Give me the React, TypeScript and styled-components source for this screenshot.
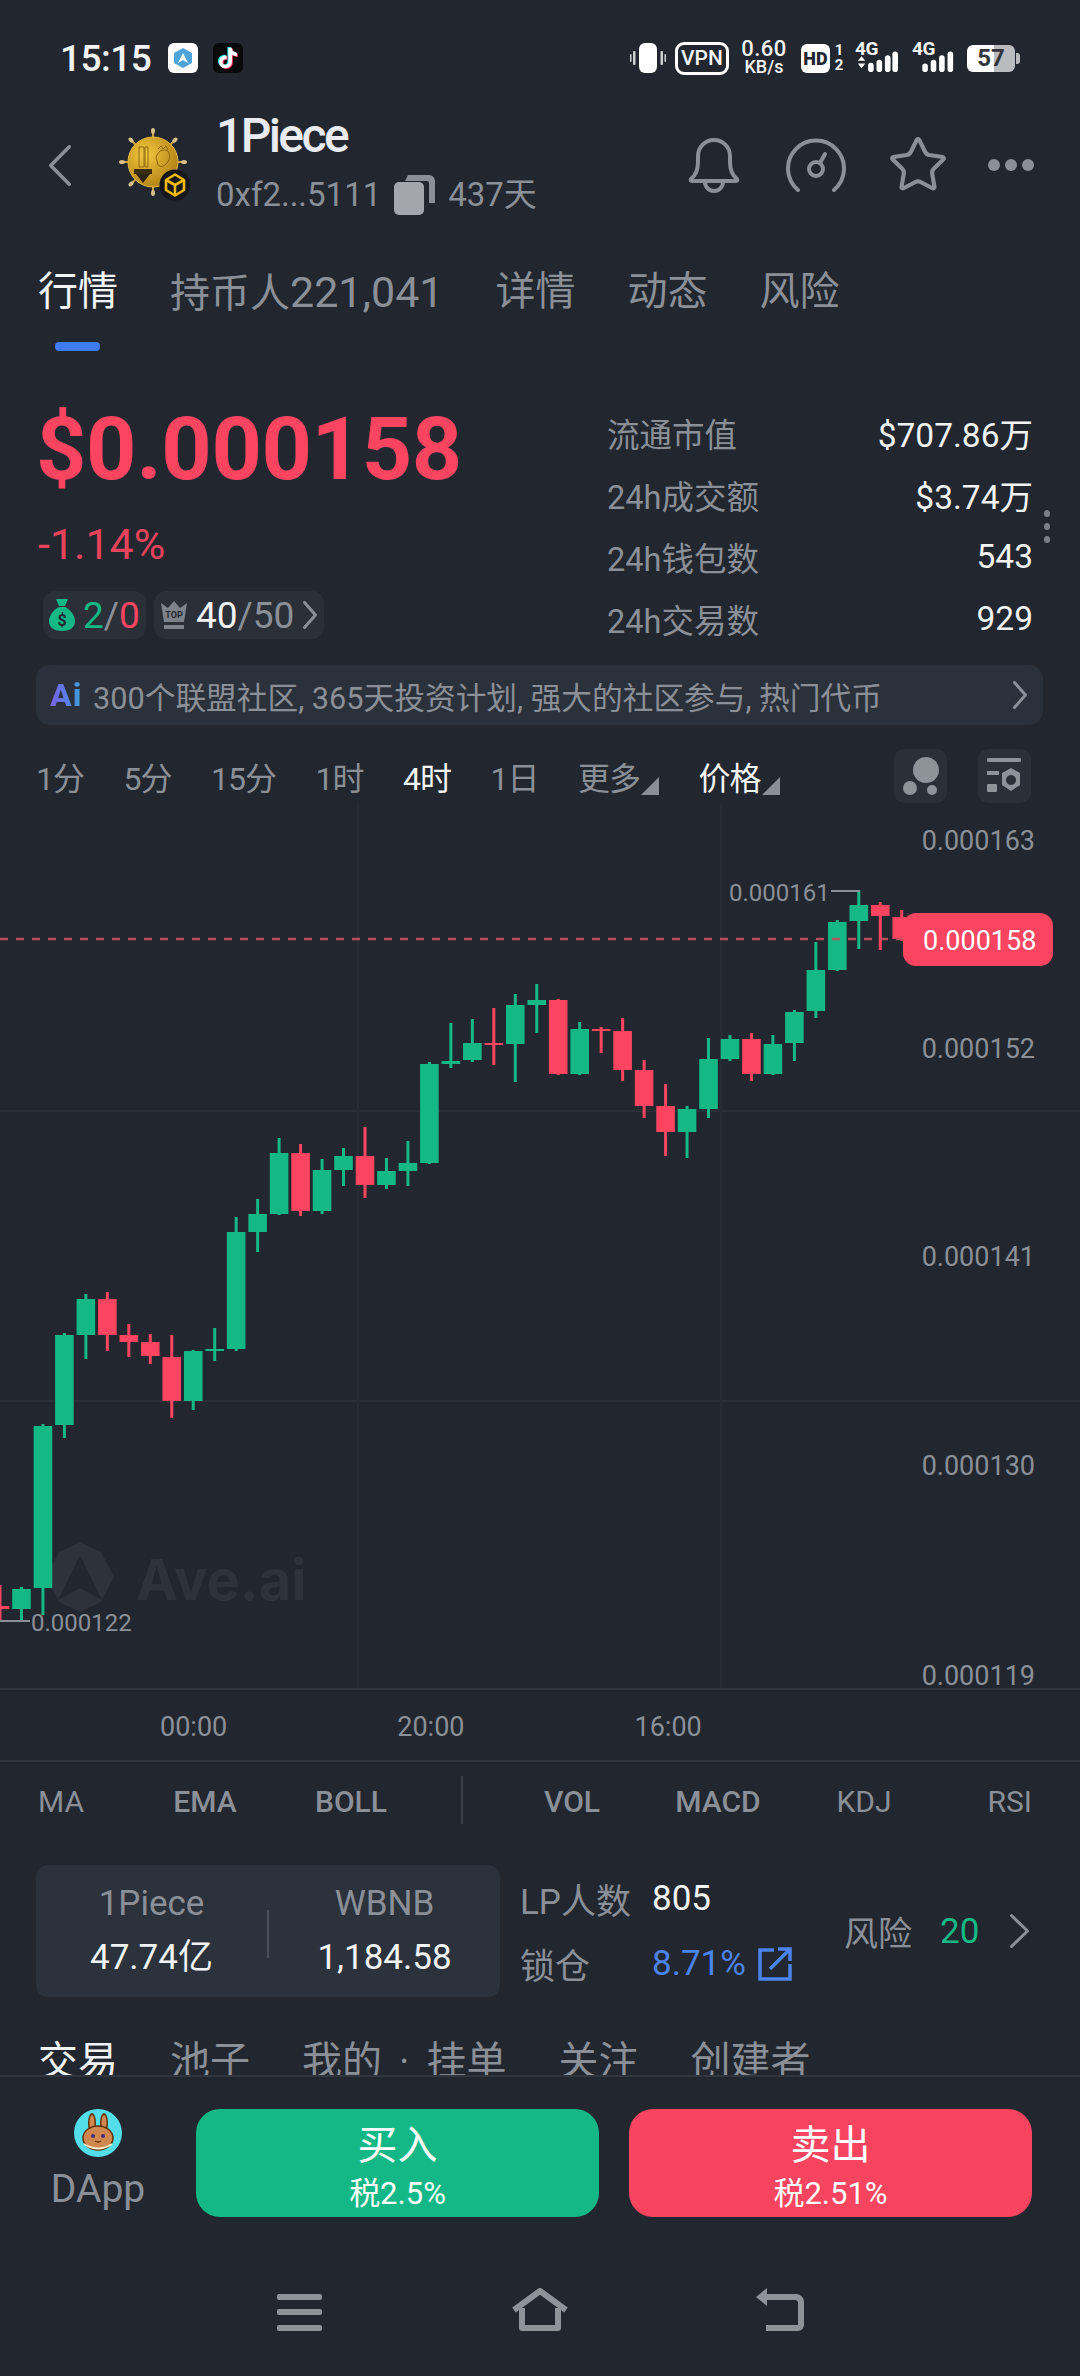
import React from 'react'
import styled, { createGlobalStyle } from 'styled-components'
import { Star } from 'lucide-react'

const GREEN = '#14b886'
const RED = '#fb4560'
const GRAY = '#8b9098'

const GlobalStyle = createGlobalStyle`
    html, body {
        margin: 0;
        padding: 0;
        background: #22262e;
    }
    * {
        box-sizing: border-box;
    }
`

const Page = styled.div`
    position: relative;
    width: 1080px;
    height: 2376px;
    overflow: hidden;
    background: #22262e;
    color: #f2f3f5;
    font-family: Roboto, "Noto Sans CJK SC", sans-serif;
`

/* status bar */
const StatusBar = styled.div`
    height: 116px;
    padding: 0 60px;
    display: flex;
    align-items: center;
`
const Clock = styled.div`
    font-size: 37px;
    font-weight: 500;
    width: 108px;
    letter-spacing: -0.5px;
`
const AppIcon = styled.div<{ $bg: string }>`
    width: 30px;
    height: 30px;
    margin-right: 15px;
    border-radius: 6px;
    background: ${props => props.$bg};
    display: flex;
    align-items: center;
    justify-content: center;
`
const StatusRight = styled.div`
    margin-left: auto;
    display: flex;
    align-items: center;
`
const VpnBox = styled.div`
    width: 54px;
    height: 33px;
    margin-left: 9px;
    border: 3px solid #fff;
    border-radius: 9px;
    font-size: 21px;
    font-weight: 500;
    display: flex;
    align-items: center;
    justify-content: center;
`
const Speed = styled.div`
    width: 48px;
    margin-left: 11px;
    text-align: center;
    font-weight: 500;
    line-height: 18px;
    font-size: 22px;
    letter-spacing: 0.5px;
    span {
        display: block;
        font-size: 18px;
        letter-spacing: 0;
        white-space: nowrap;
    }
`
const HdBox = styled.div`
    width: 29px;
    height: 29px;
    margin-left: 13px;
    background: #fff;
    border-radius: 6px;
    color: #22262e;
    font-size: 18px;
    font-weight: 900;
    display: flex;
    align-items: center;
    justify-content: center;
`
const SimNumbers = styled.div`
    width: 12px;
    margin-left: 3px;
    font-size: 15px;
    font-weight: 700;
    line-height: 15px;
    text-align: center;
`
const Signal = styled.div<{ $gap: number }>`
    position: relative;
    width: 43px;
    height: 32px;
    margin-left: ${props => props.$gap}px;
`
const SignalText = styled.div`
    position: absolute;
    left: 0;
    top: -5px;
    font-size: 19px;
    font-weight: 700;
    letter-spacing: -0.5px;
`
const Battery = styled.div`
    width: 48px;
    height: 27px;
    margin-left: 12px;
    border-radius: 6px;
    background: linear-gradient(90deg, #fff 57%, #b9bbbf 57%);
    color: #33363c;
    font-size: 24px;
    font-weight: 700;
    display: flex;
    align-items: center;
    justify-content: center;
`
const BatteryCap = styled.div`
    width: 4px;
    height: 11px;
    margin-left: 1px;
    border-radius: 0 3px 3px 0;
    background: #b9bbbf;
`

/* header */
const Header = styled.div`
    height: 98px;
    padding: 0 46px 0 48px;
    display: flex;
    align-items: center;
`
const BackButton = styled.div`
    width: 70px;
    color: ${GRAY};
    display: flex;
    transform: scaleX(-1);
    justify-content: flex-end;
`
const TokenBlock = styled.div`
    margin-left: 26px;
    margin-top: -3px;
`
const TokenName = styled.div`
    font-size: 48px;
    font-weight: 500;
    line-height: 48px;
    letter-spacing: -2.6px;
    color: #e9ebf0;
`
const TokenMeta = styled.div`
    margin-top: 15px;
    display: flex;
    align-items: center;
    gap: 13px;
    color: ${GRAY};
    font-size: 33px;
    line-height: 38px;
`
const HeaderActions = styled.div`
    margin-left: auto;
    display: flex;
    align-items: center;
    color: ${GRAY};
`
const MoreDot = styled.div`
    width: 12px;
    height: 12px;
    margin-left: 5px;
    border-radius: 50%;
    background: ${GRAY};
    &:first-of-type {
        margin-left: 39px;
    }
`

/* tabs */
const TabRow = styled.div<{ $height: number; $top: number }>`
    height: ${props => props.$height}px;
    padding: ${props => props.$top}px 38px 0;
    display: flex;
    gap: 52px;
    overflow: hidden;
`
const Tab = styled.div<{ $active?: boolean }>`
    position: relative;
    font-size: 40px;
    line-height: 44px;
    height: 44px;
    white-space: nowrap;
    color: ${props => (props.$active ? '#f2f3f5' : GRAY)};
`
const TabCount = styled.span`
    font-size: 43px;
`
const TabDot = styled.span`
    margin: 0 17px;
`
const TabMark = styled.div`
    width: 45px;
    height: 9px;
    margin: 28px 0 0 17px;
    border-radius: 4px;
    background: #3f7bf0;
`

/* quote */
const Quote = styled.div`
    height: 300px;
    padding: 52px 47px 0 36px;
    display: flex;
    justify-content: space-between;
`
const PriceColumn = styled.div`
    width: 440px;
`
const Price = styled.div`
    margin-top: -1px;
    font-size: 88px;
    font-weight: 700;
    line-height: 92px;
    letter-spacing: -0.4px;
    color: ${RED};
`
const Change = styled.div`
    margin: 24px 0 0 2px;
    font-size: 43px;
    line-height: 50px;
    color: #e8435c;
`
const BadgeRow = styled.div`
    margin: 22px 0 0 7px;
    display: flex;
    gap: 8px;
`
const Badge = styled.div`
    height: 48px;
    padding: 0 6px;
    display: flex;
    align-items: center;
    gap: 8px;
    border-radius: 12px;
    background: #2a2f38;
    font-size: 37px;
    color: ${GRAY};
`
const BadgeText = styled.span<{ $color: string }>`
    color: ${props => props.$color};
`
const StatsColumn = styled.div`
    width: 426px;
    margin-top: -3px;
`
const StatRow = styled.div`
    height: 62px;
    display: flex;
    align-items: center;
    justify-content: space-between;
    font-size: 33.5px;
    color: #f2f3f5;
`
const StatLabel = styled.span`
    font-size: 32.5px;
    color: ${GRAY};
`
const SideDots = styled.div`
    position: absolute;
    left: 1044px;
    top: 510px;
    display: flex;
    flex-direction: column;
    gap: 6px;
    i {
        width: 6px;
        height: 7px;
        border-radius: 50%;
        background: #7b8088;
    }
`

/* ai banner */
const AiBanner = styled.div`
    height: 60px;
    margin: 13px 37px 0 36px;
    padding: 0 15px 0 14px;
    display: flex;
    align-items: center;
    border-radius: 14px;
    background: #2b313b;
    color: ${GRAY};
    font-size: 30.7px;
    white-space: nowrap;
`
const AiMark = styled.span`
    width: 43px;
    font-size: 32px;
    font-weight: 800;
    letter-spacing: 1px;
    background: linear-gradient(90deg, #7a5fe0 0%, #4d8be8 55%, #1fc4a0 100%);
    -webkit-background-clip: text;
    background-clip: text;
    color: transparent;
`
const BannerArrow = styled.div`
    margin-left: auto;
    display: flex;
`

/* time frames */
const FrameRow = styled.div`
    height: 54px;
    margin-top: 24px;
    padding: 0 49px 0 36px;
    display: flex;
    align-items: center;
    gap: 39.5px;
`
const Frame = styled.div<{ $active?: boolean; $arrow?: boolean }>`
    position: relative;
    font-size: 32px;
    letter-spacing: -1px;
    margin-right: ${props => (props.$arrow ? 19 : 0)}px;
    color: ${props => (props.$active ? '#f2f3f5' : GRAY)};
    &::after {
        content: '';
        display: ${props => (props.$arrow ? 'block' : 'none')};
        position: absolute;
        right: -19px;
        bottom: 4px;
        border-left: 18px solid transparent;
        border-bottom: 18px solid ${GRAY};
    }
`
const ToolGroup = styled.div`
    margin-left: auto;
    display: flex;
    gap: 31px;
`
const ToolButton = styled.div`
    width: 53px;
    height: 54px;
    border-radius: 10px;
    background: #2a2f38;
    display: flex;
    align-items: center;
    justify-content: center;
`

/* chart */
const ChartBox = styled.div`
    height: 887px;
    border-bottom: 2px solid #31363e;
`
const ChartSvg = styled.svg`
    display: block;
    overflow: visible;
    font-family: Roboto, sans-serif;
`
const TimeAxis = styled.div`
    height: 72px;
    border-bottom: 2px solid #31363e;
    color: ${GRAY};
    font-size: 27px;
    display: flex;
    align-items: center;
    padding: 4px 0 0 160px;
    gap: 170px;
`

/* indicators */
const IndicatorRow = styled.div`
    height: 78px;
    padding: 0 0 0 38px;
    display: flex;
    align-items: center;
    color: ${GRAY};
    font-size: 30px;
`
const Indicator = styled.div<{ $width: number; $align: string; $strong?: boolean }>`
    width: ${props => props.$width}px;
    text-align: ${props => props.$align};
    font-weight: ${props => (props.$strong ? 500 : 400)};
`
const IndicatorDivider = styled.div`
    width: 2px;
    height: 48px;
    margin: -3px 36px 0 37px;
    background: #3a3f47;
`

/* pool */
const PoolRow = styled.div`
    height: 132px;
    margin-top: 25px;
    padding-left: 36px;
    display: flex;
    align-items: center;
    white-space: nowrap;
`
const PoolCard = styled.div`
    flex: none;
    width: 464px;
    height: 132px;
    border-radius: 12px;
    background: #2b323c;
    display: flex;
    align-items: center;
    font-size: 35px;
`
const PoolCell = styled.div`
    flex: 1;
    text-align: center;
    line-height: 54px;
    color: #f2f3f5;
`
const PoolName = styled.div`
    color: ${GRAY};
`
const PoolDivider = styled.div`
    width: 2px;
    height: 48px;
    margin-top: 6px;
    background: #4a5059;
`
const LpColumn = styled.div`
    flex: none;
    margin-left: 20px;
    width: 324px;
    font-size: 35px;
    color: ${GRAY};
`
const LpRow = styled.div`
    height: 65px;
    display: flex;
    align-items: center;
`
const LpLabel = styled.span`
    width: 132px;
`
const LpValue = styled.span<{ $color: string }>`
    color: ${props => props.$color};
    margin-right: 12px;
`
const RiskBlock = styled.div`
    flex: none;
    display: flex;
    align-items: center;
    font-size: 34px;
    color: ${GRAY};
`
const RiskScore = styled.span`
    margin-left: 28px;
    margin-right: 30px;
    font-size: 35px;
    color: ${GREEN};
`

/* footer */
const FooterBar = styled.div`
    border-top: 2px solid #31363e;
    padding-top: 32px;
    display: flex;
    gap: 30px;
`
const DappBlock = styled.div`
    width: 166px;
    padding-left: 30px;
    display: flex;
    flex-direction: column;
    align-items: center;
    gap: 7px;
    color: ${GRAY};
    font-size: 39px;
    line-height: 50px;
`
const TradeButton = styled.div<{ $color: string }>`
    width: 403px;
    height: 108px;
    padding-top: 14px;
    border-radius: 24px;
    background: ${props => props.$color};
    color: #fff;
    text-align: center;
    font-size: 40px;
    line-height: 46px;
`
const TradeTax = styled.div`
    margin-top: 7px;
    font-size: 31px;
    line-height: 36px;
`
const NavBar = styled.div`
    margin-top: 71px;
    padding-left: 277px;
    display: flex;
    align-items: flex-end;
    gap: 189px;
    color: #8e9299;
`

type Candle = [number, 'g' | 'r', number, number, number, number]

// k, colour, body top, body bottom, wick top, wick bottom (page y)
const candles: Candle[] = [
    [0, 'r', 1606, 1609, 1585, 1621],
    [1, 'g', 1589, 1609, 1587, 1621],
    [2, 'g', 1426, 1588, 1424, 1615],
    [3, 'g', 1335, 1425, 1333, 1438],
    [4, 'g', 1299, 1335, 1294, 1359],
    [5, 'r', 1299, 1335, 1292, 1351],
    [6, 'r', 1335, 1342, 1324, 1357],
    [7, 'r', 1342, 1356, 1334, 1364],
    [8, 'r', 1357, 1401, 1335, 1418],
    [9, 'g', 1351, 1401, 1350, 1410],
    [10, 'g', 1349, 1351, 1328, 1361],
    [11, 'g', 1232, 1349, 1217, 1351],
    [12, 'g', 1214, 1232, 1199, 1252],
    [13, 'g', 1153, 1214, 1138, 1215],
    [14, 'r', 1153, 1211, 1144, 1216],
    [15, 'g', 1170, 1211, 1159, 1214],
    [16, 'g', 1156, 1170, 1148, 1186],
    [17, 'r', 1156, 1185, 1127, 1198],
    [18, 'g', 1171, 1185, 1158, 1189],
    [19, 'g', 1163, 1171, 1141, 1186],
    [20, 'g', 1064, 1163, 1062, 1164],
    [21, 'g', 1061, 1064, 1023, 1068],
    [22, 'g', 1043, 1060, 1019, 1062],
    [23, 'r', 1043, 1045, 1008, 1065],
    [24, 'g', 1005, 1044, 994, 1082],
    [25, 'g', 1000, 1005, 984, 1033],
    [26, 'r', 1000, 1074, 999, 1075],
    [27, 'g', 1029, 1074, 1022, 1075],
    [28, 'r', 1029, 1031, 1027, 1053],
    [29, 'r', 1031, 1070, 1018, 1081],
    [30, 'r', 1070, 1106, 1060, 1118],
    [31, 'r', 1106, 1132, 1084, 1156],
    [32, 'g', 1109, 1132, 1106, 1158],
    [33, 'g', 1059, 1109, 1038, 1118],
    [34, 'g', 1039, 1059, 1035, 1061],
    [35, 'r', 1039, 1074, 1033, 1081],
    [36, 'g', 1044, 1074, 1035, 1075],
    [37, 'g', 1012, 1043, 1010, 1061],
    [38, 'g', 970, 1011, 942, 1018],
    [39, 'g', 922, 970, 920, 971],
    [40, 'g', 905, 921, 890, 949],
    [41, 'r', 905, 916, 902, 950],
    [42, 'r', 917, 939, 910, 941],
]

const axisLabels: [string, number][] = [
    ['0.000163', 840],
    ['0.000152', 1048],
    ['0.000141', 1256],
    ['0.000130', 1465],
    ['0.000119', 1675],
]

const TIKTOK = 'M12.525.02c1.31-.02 2.61-.01 3.91-.02.08 1.53.63 3.09 1.75 4.17 1.12 1.11 2.7 1.62 4.24 1.79v4.03c-1.44-.05-2.89-.35-4.2-.97-.57-.26-1.1-.59-1.62-.93-.01 2.92.01 5.84-.02 8.75-.08 1.4-.54 2.79-1.35 3.94-1.31 1.92-3.58 3.17-5.91 3.21-1.43.08-2.86-.31-4.08-1.03-2.02-1.19-3.44-3.37-3.65-5.71-.02-.5-.03-1-.01-1.49.18-1.9 1.12-3.72 2.58-4.96 1.66-1.44 3.98-2.13 6.15-1.72.02 1.48-.04 2.96-.04 4.44-.99-.32-2.15-.23-3.02.37-.63.41-1.11 1.04-1.36 1.75-.21.51-.15 1.07-.14 1.61.24 1.64 1.82 3.02 3.5 2.87 1.12-.01 2.19-.66 2.77-1.61.19-.33.4-.67.41-1.06.1-1.79.06-3.57.07-5.36.01-4.03-.01-8.05.02-12.07z'

// the thin tall chevrons of the app are not in any icon set at these proportions
function Chevron({ width, height, stroke }: { width: number; height: number; stroke: number }) {
    const pad = stroke / 2 + 1
    return (
        <svg width={width} height={height} viewBox={`0 0 ${width} ${height}`} fill="none" stroke="currentColor" strokeWidth={stroke} strokeLinecap="round" strokeLinejoin="round">
            <path d={`M${pad} ${pad} L${width - pad} ${height / 2} L${pad} ${height - pad}`} />
        </svg>
    )
}

function CandleChart() {
    return (
        <ChartSvg width="1080" height="885" viewBox="0 803 1080 885">
            <line x1="0" y1="1111" x2="1080" y2="1111" stroke="#2a2e36" strokeWidth="2" />
            <line x1="0" y1="1401" x2="1080" y2="1401" stroke="#2a2e36" strokeWidth="2" />
            <line x1="358" y1="803" x2="358" y2="1688" stroke="#262a32" strokeWidth="2" />
            <line x1="721" y1="803" x2="721" y2="1688" stroke="#262a32" strokeWidth="2" />

            <g fill="#2e333b">
                <path d="M80 1542 L101 1552 L114 1577 L101 1602 L80 1612 L59 1602 L46 1577 L59 1552 Z M80 1555 L58 1600 L80 1588 L102 1600 Z" fillRule="evenodd" />
                <text x="136" y="1600" fontSize="56" fontWeight="700" fontFamily="Inter, Roboto, sans-serif">Ave.ai</text>
            </g>

            {candles.map(([k, color, top, bottom, wickTop, wickBottom]) => {
                const x = k * 21.47
                const fill = color === 'g' ? GREEN : RED
                return (
                    <g key={k} fill={fill}>
                        <rect x={x - 1.5} y={wickTop} width="3" height={wickBottom - wickTop} />
                        <rect x={x - 9.3} y={top} width="18.6" height={bottom - top} />
                    </g>
                )
            })}

            <line x1="0" y1="939" x2="903" y2="939" stroke="#c04e5e" strokeOpacity="0.95" strokeWidth="2.5" strokeDasharray="8 8" />

            <g fontSize="27" fill={GRAY} textAnchor="end">
                {axisLabels.map(([label, y]) => (
                    <text key={label} x="1035" y={y + 10}>{label}</text>
                ))}
            </g>

            <text x="729" y="901" fontSize="24" fill={GRAY}>0.000161</text>
            <line x1="831" y1="891" x2="860" y2="891" stroke={GRAY} strokeWidth="2" />
            <text x="31" y="1631" fontSize="24" fill={GRAY}>0.000122</text>
            <line x1="0" y1="1621" x2="30" y2="1621" stroke={GRAY} strokeWidth="2" />

            <rect x="903" y="913" width="150" height="53" rx="13" fill={RED} />
            <text x="923" y="950" fontSize="27" fill="#fff">0.000158</text>
        </ChartSvg>
    )
}

function CoinAvatar() {
    const spokes = [0, 45, 90, 135, 180, 225, 270, 315]
    return (
        <svg width="72" height="76" viewBox="120 128 72 76">
            <defs>
                <radialGradient id="coinFill" cx="35%" cy="35%" r="80%">
                    <stop offset="0%" stopColor="#f3c83f" />
                    <stop offset="100%" stopColor="#a8770f" />
                </radialGradient>
            </defs>
            {spokes.map(a => (
                <g key={a} transform={`rotate(${a} 155 163)`}>
                    <rect x="154" y="131" width="2" height="8" fill="#c9a24a" />
                    <ellipse cx="155" cy="132" rx="2" ry="3" fill="#d8c088" />
                </g>
            ))}
            <circle cx="155" cy="163" r="25" fill="url(#coinFill)" stroke="#e6bb3e" strokeWidth="1" />
            <path d="M141 148 h5 v20 h-5 z M147 148 h3 v20 h-3 z" fill="none" stroke="#8f6710" strokeWidth="1" />
            <rect x="136" y="170" width="18" height="5" fill="#3a2e10" />
            <path d="M138 175 h14 l-7 9 z" fill="#2b2412" />
            <path d="M158 158 q4 -10 12 -6 q4 6 -1 12 q-5 6 -9 2 z" fill="none" stroke="#8f6710" strokeWidth="1" />
            <path d="M160 150 l3 -3 l2 3 l3 -3 l2 4" fill="none" stroke="#8f6710" strokeWidth="1" />
            <circle cx="177" cy="186" r="15.5" fill="#16171a" />
            <g fill="none" stroke="#f0b90b" strokeWidth="2.6" strokeLinejoin="round">
                <path d="M177 175.5 L186 181 V191 L177 196.5 L168 191 V181 Z" />
                <path d="M168 181 L177 186 L186 181 M177 186 V196" />
            </g>
        </svg>
    )
}

export default function App() {
    return (
        <Page>
            <GlobalStyle />

            <StatusBar>
                <Clock>15:15</Clock>
                <AppIcon $bg="#fff">
                    <svg width="22" height="22" viewBox="0 0 22 22">
                        <path d="M11 1 L20 6 V16 L11 21 L2 16 V6 Z" fill="#4ea3d8" />
                        <path d="M11 6 L6 16 L11 13 L16 16 Z" fill="#fff" />
                    </svg>
                </AppIcon>
                <AppIcon $bg="#08090c">
                    <svg width="24" height="24" viewBox="-2 -2 28 28">
                        <path d={TIKTOK} fill="#25f4ee" transform="translate(-1.2 -0.8)" />
                        <path d={TIKTOK} fill="#fe2c55" transform="translate(1.2 0.8)" />
                        <path d={TIKTOK} fill="#fff" />
                    </svg>
                </AppIcon>
                <StatusRight>
                    <svg width="36" height="30" viewBox="0 0 36 30">
                        <rect x="9" y="0" width="18" height="30" rx="6" fill="#fff" />
                        <rect x="3" y="8" width="2.5" height="14" rx="1" fill="#cfd1d4" />
                        <rect x="0" y="11" width="1.5" height="8" rx="0.7" fill="#cfd1d4" />
                        <rect x="30.5" y="8" width="2.5" height="14" rx="1" fill="#cfd1d4" />
                        <rect x="34.5" y="11" width="1.5" height="8" rx="0.7" fill="#cfd1d4" />
                    </svg>
                    <VpnBox>VPN</VpnBox>
                    <Speed>0.60<span>KB/s</span></Speed>
                    <HdBox>HD</HdBox>
                    <SimNumbers>1<br />2</SimNumbers>
                    <Signal $gap={10}>
                        <SignalText>4G</SignalText>
                        <svg width="43" height="32" viewBox="0 0 46 32">
                            <path d="M3 19 l4 -5 l4 5 z M3 22 l4 5 l4 -5 z" fill="#fff" />
                            <rect x="14" y="21" width="6" height="10" rx="3" fill="#fff" />
                            <rect x="23" y="18" width="6" height="13" rx="3" fill="#fff" />
                            <rect x="32" y="13" width="6" height="18" rx="3" fill="#fff" />
                            <rect x="40" y="9" width="6" height="22" rx="3" fill="#fff" />
                        </svg>
                    </Signal>
                    <Signal $gap={14}>
                        <SignalText>4G</SignalText>
                        <svg width="43" height="32" viewBox="0 0 46 32">
                            <rect x="11" y="22" width="6" height="9" rx="3" fill="#fff" />
                            <rect x="20" y="18" width="6" height="13" rx="3" fill="#fff" />
                            <rect x="29" y="13" width="6" height="18" rx="3" fill="#fff" />
                            <rect x="38" y="9" width="6" height="22" rx="3" fill="#fff" />
                        </svg>
                    </Signal>
                    <Battery>57</Battery>
                    <BatteryCap />
                </StatusRight>
            </StatusBar>

            <Header>
                <BackButton>
                    <Chevron width={24} height={43} stroke={3.5} />
                </BackButton>
                <CoinAvatar />
                <TokenBlock>
                    <TokenName>1Piece</TokenName>
                    <TokenMeta>
                        0xf2...5111
                        <svg width="41" height="40" viewBox="0 0 41 40">
                            <path d="M14 0 H35 a6 6 0 0 1 6 6 V28 H35 V8 a2 2 0 0 0 -2 -2 H11 Z" fill={GRAY} />
                            <rect x="0" y="7" width="30" height="33" rx="5" fill="#a3a7ad" />
                        </svg>
                        <span>437天</span>
                    </TokenMeta>
                </TokenBlock>
                <HeaderActions>
                    <svg width="54" height="56" viewBox="0 0 54 56" fill="none" stroke="currentColor" strokeWidth="4" strokeLinejoin="round">
                        <path d="M4 42 c5 -4 7 -9 7 -17 v-6 a16 16 0 0 1 32 0 v6 c0 8 2 13 7 17 a1.2 1.2 0 0 1 -1 2 H5 a1.2 1.2 0 0 1 -1 -2 z" />
                        <path d="M18 45 a9 9 0 0 0 18 0" />
                    </svg>
                    <svg width="60" height="54" viewBox="0 0 60 54" fill="none" stroke="currentColor" strokeWidth="4" strokeLinecap="round" style={{ marginLeft: 45 }}>
                        <path d="M12 52 A28 28 0 1 1 48 52" />
                        <circle cx="30" cy="31" r="7" />
                        <path d="M34 25 L39 16" />
                    </svg>
                    <Star size={62} strokeWidth={1.6} style={{ marginLeft: 41 }} />
                    <MoreDot />
                    <MoreDot />
                    <MoreDot />
                </HeaderActions>
            </Header>

            <TabRow $height={138} $top={56}>
                <div>
                    <Tab $active>行情</Tab>
                    <TabMark />
                </div>
                <Tab>持币人<TabCount>221,041</TabCount></Tab>
                <Tab>详情</Tab>
                <Tab>动态</Tab>
                <Tab>风险</Tab>
            </TabRow>

            <Quote>
                <PriceColumn>
                    <Price>$0.000158</Price>
                    <Change>-1.14%</Change>
                    <BadgeRow>
                        <Badge>
                            <svg width="26" height="32" viewBox="0 0 26 32">
                                <path d="M7 0 H19 L16 7 H10 Z" fill={GREEN} />
                                <path d="M10 8 H16 C22 11 26 17 26 22 C26 29 20 32 13 32 C6 32 0 29 0 22 C0 17 4 11 10 8 Z" fill={GREEN} />
                                <text x="13" y="27" fontSize="16" fontWeight="700" fill="#22262e" textAnchor="middle">$</text>
                            </svg>
                            <span>
                                <BadgeText $color={GREEN}>2</BadgeText>/<BadgeText $color={RED}>0</BadgeText>
                            </span>
                        </Badge>
                        <Badge>
                            <svg width="28" height="30" viewBox="0 0 28 30">
                                <path d="M1 3 L8 8 L14 1 L20 8 L27 3 L24 22 H4 Z" fill="#7e838b" />
                                <rect x="4" y="25" width="20" height="4" fill="#7e838b" />
                                <text x="14" y="18" fontSize="9" fontWeight="700" fill="#22262e" textAnchor="middle">TOP</text>
                            </svg>
                            <span>
                                <BadgeText $color="#f2f3f5">40</BadgeText>/50
                            </span>
                            <Chevron width={16} height={30} stroke={3} />
                        </Badge>
                    </BadgeRow>
                </PriceColumn>
                <StatsColumn>
                    <StatRow><StatLabel>流通市值</StatLabel>$707.86万</StatRow>
                    <StatRow><StatLabel>24h成交额</StatLabel>$3.74万</StatRow>
                    <StatRow><StatLabel>24h钱包数</StatLabel>543</StatRow>
                    <StatRow><StatLabel>24h交易数</StatLabel>929</StatRow>
                </StatsColumn>
            </Quote>
            <SideDots><i /><i /><i /></SideDots>

            <AiBanner>
                <AiMark>Ai</AiMark>
                <span>300个联盟社区, 365天投资计划, 强大的社区参与, 热门代币</span>
                <BannerArrow>
                    <Chevron width={16} height={30} stroke={3} />
                </BannerArrow>
            </AiBanner>

            <FrameRow>
                <Frame>1分</Frame>
                <Frame>5分</Frame>
                <Frame>15分</Frame>
                <Frame>1时</Frame>
                <Frame $active>4时</Frame>
                <Frame>1日</Frame>
                <Frame $arrow>更多</Frame>
                <Frame $active $arrow>价格</Frame>
                <ToolGroup>
                    <ToolButton>
                        <svg width="36" height="38" viewBox="0 0 36 38" fill="#8e9299">
                            <circle cx="23" cy="13" r="13" />
                            <circle cx="7" cy="31" r="7" />
                            <circle cx="29" cy="33" r="5" />
                        </svg>
                    </ToolButton>
                    <ToolButton>
                        <svg width="36" height="36" viewBox="0 0 36 36" fill="#8e9299">
                            <rect x="0" y="0" width="34" height="4" rx="1" />
                            <rect x="0" y="13" width="12" height="4" />
                            <rect x="0" y="26" width="10" height="8" rx="1" />
                            <path d="M24 10 L33 15 V27 L24 33 L15 27 V15 Z M24 17 a5 5 0 1 0 0.01 0 Z" fillRule="evenodd" />
                        </svg>
                    </ToolButton>
                </ToolGroup>
            </FrameRow>

            <ChartBox>
                <CandleChart />
            </ChartBox>
            <TimeAxis>
                <span>00:00</span>
                <span>20:00</span>
                <span>16:00</span>
            </TimeAxis>

            <IndicatorRow>
                <Indicator $width={94} $align="left">MA</Indicator>
                <Indicator $width={146} $align="center" $strong>EMA</Indicator>
                <Indicator $width={146} $align="center" $strong>BOLL</Indicator>
                <IndicatorDivider />
                <Indicator $width={146} $align="center" $strong>VOL</Indicator>
                <Indicator $width={146} $align="center" $strong>MACD</Indicator>
                <Indicator $width={146} $align="center">KDJ</Indicator>
                <Indicator $width={95} $align="right">RSI</Indicator>
            </IndicatorRow>

            <PoolRow>
                <PoolCard>
                    <PoolCell>
                        <PoolName>1Piece</PoolName>
                        47.74亿
                    </PoolCell>
                    <PoolDivider />
                    <PoolCell>
                        <PoolName>WBNB</PoolName>
                        1,184.58
                    </PoolCell>
                </PoolCard>
                <LpColumn>
                    <LpRow><LpLabel>LP人数</LpLabel><LpValue $color="#f2f3f5">805</LpValue></LpRow>
                    <LpRow>
                        <LpLabel>锁仓</LpLabel>
                        <LpValue $color="#4a84ec">8.71%</LpValue>
                        <svg width="34" height="34" viewBox="0 0 34 34" fill="none" stroke="#4a84ec" strokeWidth="3.5">
                            <path d="M16 3 H2 V32 H32 V17" />
                            <path d="M12 22 L31 3 M20 2 H32 V14" />
                        </svg>
                    </LpRow>
                </LpColumn>
                <RiskBlock>
                    风险
                    <RiskScore>20</RiskScore>
                    <Chevron width={21} height={36} stroke={3} />
                </RiskBlock>
            </PoolRow>

            <TabRow $height={78} $top={43}>
                <Tab $active>交易</Tab>
                <Tab>池子</Tab>
                <Tab>我的<TabDot>·</TabDot>挂单</Tab>
                <Tab>关注</Tab>
                <Tab>创建者</Tab>
            </TabRow>

            <FooterBar>
                <DappBlock>
                    <svg width="48" height="48" viewBox="0 0 48 48">
                        <circle cx="24" cy="24" r="24" fill="#53dee9" />
                        <ellipse cx="18" cy="14" rx="4" ry="10" fill="#633001" />
                        <ellipse cx="30" cy="14" rx="4" ry="10" fill="#633001" />
                        <ellipse cx="18" cy="14" rx="2.5" ry="8" fill="#d1884f" />
                        <ellipse cx="30" cy="14" rx="2.5" ry="8" fill="#d1884f" />
                        <ellipse cx="24" cy="29" rx="15" ry="12" fill="#d1884f" stroke="#633001" strokeWidth="1.5" />
                        <circle cx="19" cy="27" r="2" fill="#452a7a" />
                        <circle cx="29" cy="27" r="2" fill="#452a7a" />
                        <path d="M21 32 q3 2 6 0" stroke="#633001" strokeWidth="1.3" fill="none" />
                        <path d="M10 35 q14 9 28 0" stroke="#fec" strokeWidth="2" fill="none" />
                    </svg>
                    DApp
                </DappBlock>
                <TradeButton $color="#14b886">
                    买入
                    <TradeTax>税2.5%</TradeTax>
                </TradeButton>
                <TradeButton $color="#f9445f">
                    卖出
                    <TradeTax>税2.51%</TradeTax>
                </TradeButton>
            </FooterBar>

            <NavBar>
                <svg width="45" height="37" viewBox="0 0 45 37" fill="currentColor">
                    <rect x="0" y="0" width="45" height="6" rx="2" />
                    <rect x="0" y="15" width="45" height="6" rx="2" />
                    <rect x="0" y="31" width="45" height="6" rx="2" />
                </svg>
                <svg width="58" height="43" viewBox="0 0 58 43" fill="none" stroke="currentColor" strokeWidth="6" strokeLinejoin="round">
                    <path d="M3 22 L29 3 L55 22" />
                    <path d="M11 20 V40 H47 V20" />
                </svg>
                <svg width="48" height="43" viewBox="0 0 48 43" fill="currentColor" style={{ marginLeft: -2 }}>
                    <path d="M11 0 V6 H40 a8 8 0 0 1 8 8 V37 a6 6 0 0 1 -6 6 H10 V37 H42 V15 a3 3 0 0 0 -3 -3 H11 V18 L0 9 Z" />
                </svg>
            </NavBar>
        </Page>
    )
}
